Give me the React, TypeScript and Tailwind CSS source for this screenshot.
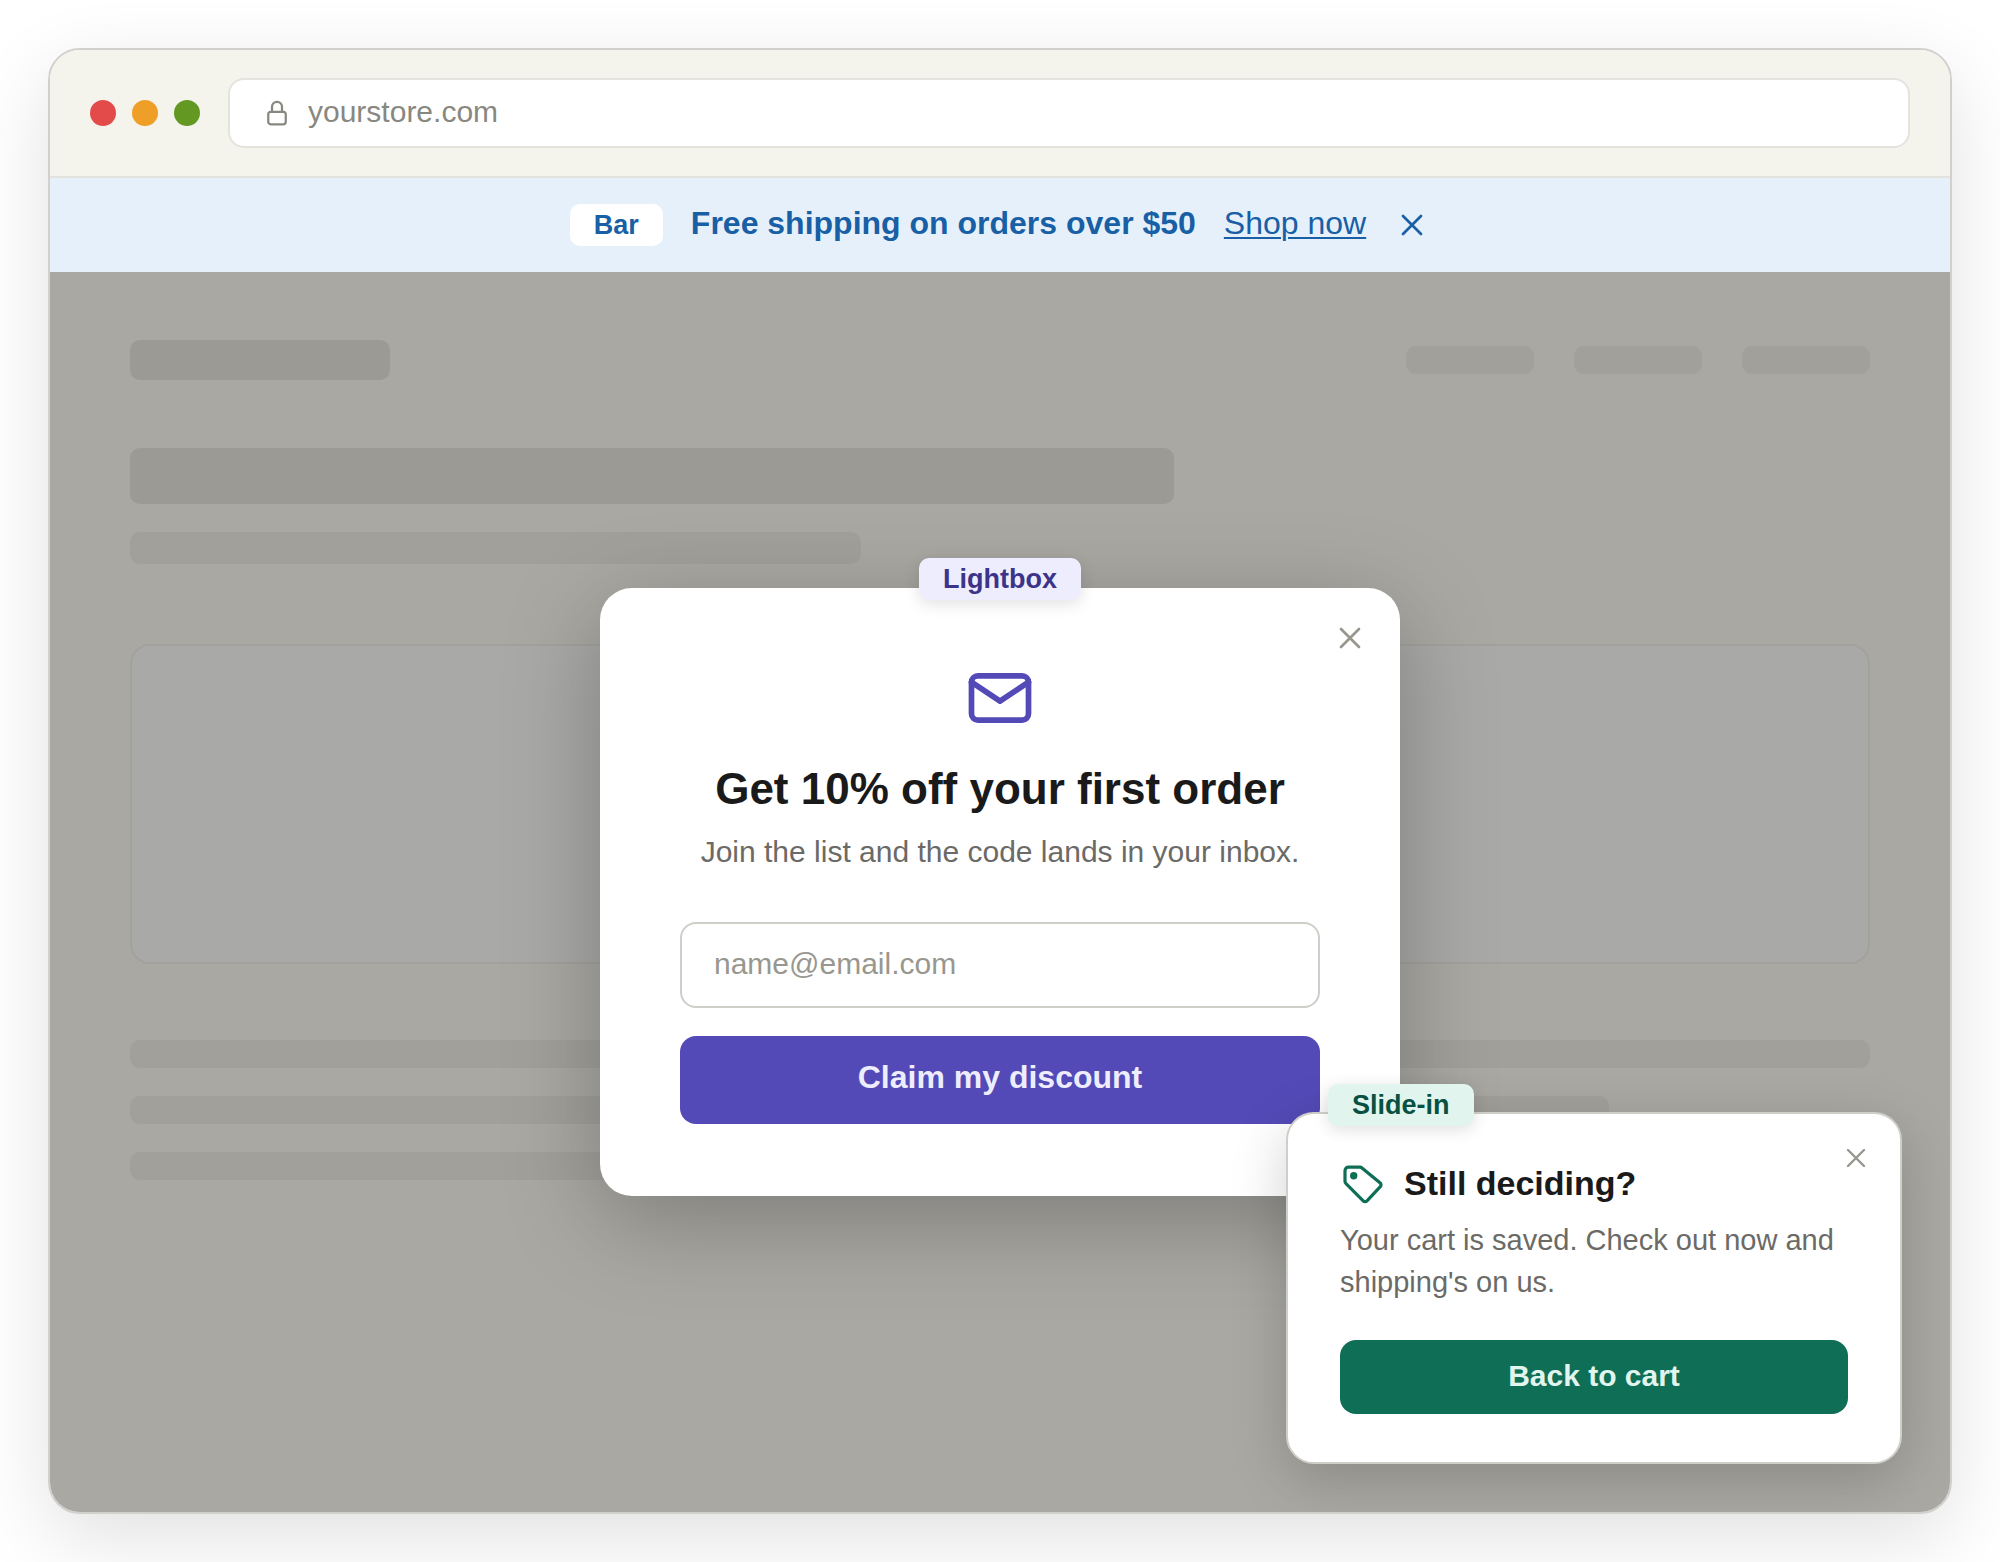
import type { ReactNode } from "react";

function Icon({ className, stroke = 1.8, children }: { className: string; stroke?: number; children: ReactNode }) {
  return (
    <svg
      className={className}
      viewBox="0 0 24 24"
      fill="none"
      stroke="currentColor"
      strokeWidth={stroke}
      strokeLinecap="round"
      strokeLinejoin="round"
      aria-hidden="true"
    >
      {children}
    </svg>
  );
}

function CloseIcon({ className }: { className: string }) {
  return (
    <Icon className={className}>
      <path d="M18 6L6 18M6 6l12 12" />
    </Icon>
  );
}

function TagIcon({ className }: { className: string }) {
  return (
    <svg className={className} viewBox="0 0 44 44" fill="none" stroke="currentColor" strokeWidth="3.2" aria-hidden="true">
      <path d="M8.5 5.2H20a3 3 0 0 1 2 .8L40.2 21a2.6 2.6 0 0 1 .1 3.7L27 38.8a2.6 2.6 0 0 1-3.8 0L6 21.6A3 3 0 0 1 5 19.5V8.7a3.5 3.5 0 0 1 3.5-3.5z" />
      <circle cx="13.7" cy="13.7" r="3.7" fill="currentColor" stroke="none" />
    </svg>
  );
}

const BADGE = "rounded-[10px] px-6 text-[27px] leading-[42px] font-bold";

function BrowserChrome() {
  return (
    <header className="flex items-center gap-7 border-b-2 border-[#e4e2dc] bg-[#f4f3ec] px-10 py-7">
      <div className="flex gap-4">
        <span className="size-[26px] rounded-full bg-[#e24b4a]" />
        <span className="size-[26px] rounded-full bg-[#ef9f27]" />
        <span className="size-[26px] rounded-full bg-[#639922]" />
      </div>
      <div className="flex flex-1 items-center gap-4 rounded-2xl border-2 border-[#e4e3de] bg-white px-8 py-3 text-[#888780]">
        <Icon className="size-[30px]">
          <rect x="5" y="11" width="14" height="10" rx="2" />
          <path d="M8 11V7a4 4 0 0 1 8 0v4" />
        </Icon>
        <span className="pb-0.5 text-[30px] leading-[40px]">yourstore.com</span>
      </div>
    </header>
  );
}

function PromoBar() {
  return (
    <div className="flex items-center justify-center gap-7 bg-[#e6f0fb] py-[26px] text-[32px] leading-[38px] text-[#185fa5]">
      <span className={`bg-white ${BADGE}`}>Bar</span>
      <span className="pb-1 font-bold">Free shipping on orders over $50</span>
      <a className="pb-1 underline decoration-2 underline-offset-[3px]" href="#shop">
        Shop now
      </a>
      <button type="button" aria-label="Dismiss bar">
        <CloseIcon className="size-9" />
      </button>
    </div>
  );
}

// Greyed-out store page behind the popups
function StoreSkeleton() {
  return (
    <div className="px-20 pt-[68px] pb-[332px]" aria-hidden="true">
      <div className="flex items-center justify-between">
        <div className="h-10 w-[260px] rounded-[10px] bg-[#9b9a95]" />
        <div className="flex gap-10">
          <div className="h-7 w-32 rounded-[10px] bg-[#a1a09b]" />
          <div className="h-7 w-32 rounded-[10px] bg-[#a1a09b]" />
          <div className="h-7 w-32 rounded-[10px] bg-[#a1a09b]" />
        </div>
      </div>
      <div className="mt-[68px] h-14 w-3/5 rounded-[10px] bg-[#9b9a95]" />
      <div className="mt-7 h-8 w-[42%] rounded-[10px] bg-[#a1a09b]" />
      <div className="mt-20 h-80 rounded-[20px] border-2 border-[#a2a19c] bg-[#a9aaa7]" />
      <div className="mt-[76px] flex flex-col gap-7">
        <div className="h-7 rounded-[10px] bg-[#a1a09b]" />
        <div className="h-7 w-[85%] rounded-[10px] bg-[#a1a09b]" />
        <div className="h-7 w-[70%] rounded-[10px] bg-[#a1a09b]" />
      </div>
    </div>
  );
}

function Lightbox() {
  return (
    <section className="relative flex w-[800px] flex-col items-center rounded-[32px] bg-white px-20 py-[72px] shadow-[0_24px_96px_rgba(0,0,0,0.26)]">
      <span className={`absolute -top-[30px] bg-[#eeedfe] text-[#3c3489] shadow-[0_4px_16px_rgba(0,0,0,0.12)] ${BADGE}`}>
        Lightbox
      </span>
      <button className="absolute top-8 right-8 text-[#98978f]" type="button" aria-label="Close lightbox">
        <CloseIcon className="size-9" />
      </button>
      <Icon className="size-[76px] text-[#534ab7]">
        <rect x="3" y="5" width="18" height="14" rx="2" />
        <path d="M3 7l9 6l9-6" />
      </Icon>
      <h2 className="mt-7 text-[44px] leading-[50px] font-bold text-[#1a1a1a]">Get 10% off your first order</h2>
      <p className="mt-[18px] text-[30px] leading-[40px] text-[#6b6a66]">Join the list and the code lands in your inbox.</p>
      <input
        className="mt-[50px] w-full rounded-2xl border-2 border-[#cfcec8] bg-white px-8 pt-[19px] pb-[21px] text-[30px] leading-[42px] placeholder:text-[#98978f]"
        type="email"
        placeholder="name@email.com"
        aria-label="Email address"
      />
      <button
        className="mt-7 w-full rounded-2xl bg-[#534ab7] pt-[21px] pb-[27px] text-[32px] leading-[40px] font-bold text-[#eeedfe]"
        type="button"
      >
        Claim my discount
      </button>
    </section>
  );
}

function SlideIn() {
  return (
    <section className="absolute right-12 bottom-12 w-[616px] rounded-[28px] border-2 border-[#cfcec8] bg-white px-[52px] py-12 shadow-[0_16px_56px_rgba(0,0,0,0.18)]">
      <span className={`absolute -top-[30px] left-10 bg-[#e1f5ee] text-[#085041] shadow-[0_4px_16px_rgba(0,0,0,0.12)] ${BADGE}`}>
        Slide-in
      </span>
      <button className="absolute top-7 right-7 text-[#98978f]" type="button" aria-label="Close slide-in">
        <CloseIcon className="size-8" />
      </button>
      <div className="flex items-start gap-5">
        <TagIcon className="size-11 text-[#0f6e56]" />
        <h3 className="text-[34px] leading-[42px] font-bold text-[#1a1a1a]">Still deciding?</h3>
      </div>
      <p className="mt-[13px] text-[29px] leading-[42px] text-[#6b6a66]">
        Your cart is saved. Check out now and shipping's on us.
      </p>
      <button
        className="mt-[37px] w-full rounded-2xl bg-[#0f6e56] pt-[15px] pb-[17px] text-[30px] leading-[42px] font-bold text-[#e1f5ee]"
        type="button"
      >
        Back to cart
      </button>
    </section>
  );
}

export default function App() {
  return (
    <main className="min-h-screen bg-white p-12 font-['Liberation_Sans',Arial,sans-serif]">
      <div className="overflow-hidden rounded-[32px] border-2 border-[#d1d0cd] shadow-[0_24px_80px_rgba(0,0,0,0.12)]">
        <BrowserChrome />
        <PromoBar />
        <div className="relative bg-[#a9a8a3]">
          <StoreSkeleton />
          <div className="absolute inset-0 flex items-center justify-center">
            <Lightbox />
          </div>
          <SlideIn />
        </div>
      </div>
    </main>
  );
}
